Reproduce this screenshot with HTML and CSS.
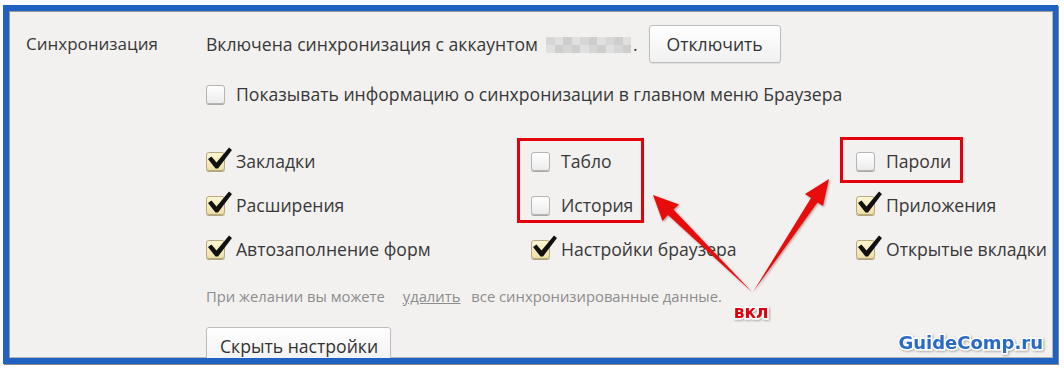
FILE: index.html
```html
<!DOCTYPE html>
<html lang="ru">
<head>
<meta charset="utf-8">
<title>Синхронизация</title>
<link rel="stylesheet" href="styles.css">
</head>
<body>
<div class="frame">
  <div class="section-label">Синхронизация</div>
  <div class="section-body">
    <div class="account-row">
      <span class="account-text">Включена синхронизация с аккаунтом</span>
      <span class="blur">
        <i class="b b1"></i><i class="b b2"></i><i class="b b3"></i><i class="b b2"></i><i class="b b1"></i><i class="b b3"></i><i class="b b2"></i><i class="b b1"></i><i class="b b3"></i><i class="b b2"></i>
        <i class="b b2"></i><i class="b b3"></i><i class="b b1"></i><i class="b b3"></i><i class="b b2"></i><i class="b b1"></i><i class="b b3"></i><i class="b b2"></i><i class="b b1"></i><i class="b b3"></i>
      </span>
      <span class="dot">.</span>
      <button class="btn btn-off">Отключить</button>
    </div>

    <label class="check-item show-info">
      <span class="box"></span>
      <span>Показывать информацию о синхронизации в главном меню Браузера</span>
    </label>

    <div class="options">
      <label class="check-item"><span class="box checked"><svg class="tick" viewBox="0 0 26 26"><path d="M1 12 L4.5 9.5 L9.5 15.5 L22 0.5 L25 3 L11 21.5 L8.5 21.5 Z"/></svg></span><span>Закладки</span></label>
      <label class="check-item"><span class="box"></span><span>Табло</span></label>
      <label class="check-item"><span class="box"></span><span>Пароли</span></label>

      <label class="check-item"><span class="box checked"><svg class="tick" viewBox="0 0 26 26"><path d="M1 12 L4.5 9.5 L9.5 15.5 L22 0.5 L25 3 L11 21.5 L8.5 21.5 Z"/></svg></span><span>Расширения</span></label>
      <label class="check-item"><span class="box"></span><span>История</span></label>
      <label class="check-item"><span class="box checked"><svg class="tick" viewBox="0 0 26 26"><path d="M1 12 L4.5 9.5 L9.5 15.5 L22 0.5 L25 3 L11 21.5 L8.5 21.5 Z"/></svg></span><span>Приложения</span></label>

      <label class="check-item"><span class="box checked"><svg class="tick" viewBox="0 0 26 26"><path d="M1 12 L4.5 9.5 L9.5 15.5 L22 0.5 L25 3 L11 21.5 L8.5 21.5 Z"/></svg></span><span>Автозаполнение форм</span></label>
      <label class="check-item"><span class="box checked"><svg class="tick" viewBox="0 0 26 26"><path d="M1 12 L4.5 9.5 L9.5 15.5 L22 0.5 L25 3 L11 21.5 L8.5 21.5 Z"/></svg></span><span>Настройки браузера</span></label>
      <label class="check-item"><span class="box checked"><svg class="tick" viewBox="0 0 26 26"><path d="M1 12 L4.5 9.5 L9.5 15.5 L22 0.5 L25 3 L11 21.5 L8.5 21.5 Z"/></svg></span><span>Открытые вкладки</span></label>
    </div>

    <p class="hint">При желании вы можете <a class="hint-link" href="#">удалить</a> все синхронизированные данные.</p>

    <button class="btn btn-hide">Скрыть настройки</button>
  </div>
</div>

<svg class="annotations" width="1064" height="368" viewBox="0 0 1064 368">
  <defs>
    <filter id="sh" x="-20%" y="-20%" width="140%" height="140%">
      <feDropShadow dx="1" dy="1" stdDeviation="0.8" flood-color="#000" flood-opacity="0.35"/>
    </filter>
  </defs>
  <rect class="hl" x="518.5" y="139.5" width="124" height="82"/>
  <rect class="hl" x="841.5" y="138.5" width="120" height="43"/>
  <g class="arrow" filter="url(#sh)">
    <polygon points="653,195 679,204.5 673.5,209.5 752,292 668,215 662.5,221"/>
    <polygon points="829,179 823,206 817.5,202.5 753,292 811,198 805,194"/>
  </g>
  <text class="vkl" x="751" y="318" text-anchor="middle">вкл</text>
  <text class="brand" x="1043" y="349" text-anchor="end">GuideComp.ru</text>
</svg>
</body>
</html>
```

FILE: styles.css
```css
html, body {
  margin: 0;
  padding: 0;
  background: #ffffff;
}

body {
  position: relative;
  width: 1064px;
  height: 368px;
  overflow: hidden;
  font-family: "Open Sans", "Noto Sans", "Liberation Sans", sans-serif;
  color: #383838;
}

.frame {
  box-sizing: border-box;
  margin: 5px 0 0 3px;
  width: 1055px;
  height: 359px;
  border: 6px solid #1f62c1;
  border-right-width: 5px;
  background: #f2f1ef;
  box-shadow: inset 1px 1px 0 #9a9a9a, inset -1px -1px 0 #b5b5b5, 1px 1px 0 #8a8a8a;
  display: grid;
  grid-template-columns: 180px 1fr;
  padding: 14px 0 0 17px;
  overflow: hidden;
}

.section-label {
  font-size: 17px;
  line-height: 38px;
  height: 38px;
}

.section-body {
  display: flex;
  flex-direction: column;
  align-items: flex-start;
}

.account-row {
  display: flex;
  align-items: center;
  height: 38px;
  font-size: 17.6px;
  white-space: nowrap;
}

.blur {
  display: grid;
  grid-template-columns: repeat(10, 8.5px);
  grid-template-rows: 8px 8px;
  margin-left: 8px;
  margin-top: 2px;
  opacity: 0.85;
}

.b { display: block; }
.b1 { background: #d2d2d2; }
.b2 { background: #dedede; }
.b3 { background: #c8c8c8; }

.dot {
  margin-left: 2px;
}

.btn {
  font-family: inherit;
  color: #333;
  font-size: 17.6px;
  white-space: nowrap;
  border: 1px solid #bdbdbd;
  border-radius: 3px;
  background: linear-gradient(#ffffff, #f0f0f0);
  box-shadow: 0 1px 1px rgba(0, 0, 0, 0.08);
  padding: 0 13px;
  height: 38px;
  cursor: pointer;
}

.btn-off {
  margin-left: 11px;
  width: 132px;
}

.btn-hide {
  margin-top: 21px;
  width: 185px;
  height: 38px;
}

.check-item {
  display: flex;
  align-items: center;
  gap: 11px;
  font-size: 17.6px;
  line-height: 24px;
  white-space: nowrap;
}

.show-info {
  margin-top: 19px;
}

.box {
  position: relative;
  flex: none;
  box-sizing: border-box;
  width: 19px;
  height: 19px;
  border: 1px solid #b4b4b4;
  border-radius: 3px;
  background: linear-gradient(#ffffff, #ececec);
  box-shadow: 0 1px 0 #a9a9a9;
}

.box.checked {
  border-color: #b9a97c;
  background: linear-gradient(#fdf6d4, #efe0a6);
  box-shadow: 0 1px 0 #b3a67f;
}

.tick {
  position: absolute;
  left: 0;
  top: -6px;
  width: 26px;
  height: 26px;
  fill: #111;
}

.options {
  display: grid;
  grid-template-columns: 325px 325px 200px;
  grid-auto-rows: 44px;
  align-items: center;
  margin-top: 33px;
}

.hint {
  margin: 15px 0 0;
  font-size: 14.8px;
  line-height: 20px;
  color: #8d8d8d;
  white-space: nowrap;
}

.hint-link {
  color: #8d8d8d;
  text-decoration: underline;
  margin: 0 7px 0 14px;
}

.annotations {
  position: absolute;
  left: 0;
  top: 0;
  pointer-events: none;
}

.hl {
  fill: none;
  stroke: #e3000b;
  stroke-width: 3;
}

.arrow polygon {
  fill: #e80c0c;
}

.vkl {
  font-family: "DejaVu Sans", sans-serif;
  font-weight: bold;
  font-size: 17px;
  fill: #e0000a;
  stroke: #ffffff;
  stroke-width: 3px;
  paint-order: stroke;
  filter: url(#sh);
}

.brand {
  font-family: "DejaVu Sans", sans-serif;
  font-weight: bold;
  font-size: 18px;
  fill: #2a6bc6;
  stroke: #ffffff;
  stroke-width: 3px;
  paint-order: stroke;
  filter: url(#sh);
}
```
